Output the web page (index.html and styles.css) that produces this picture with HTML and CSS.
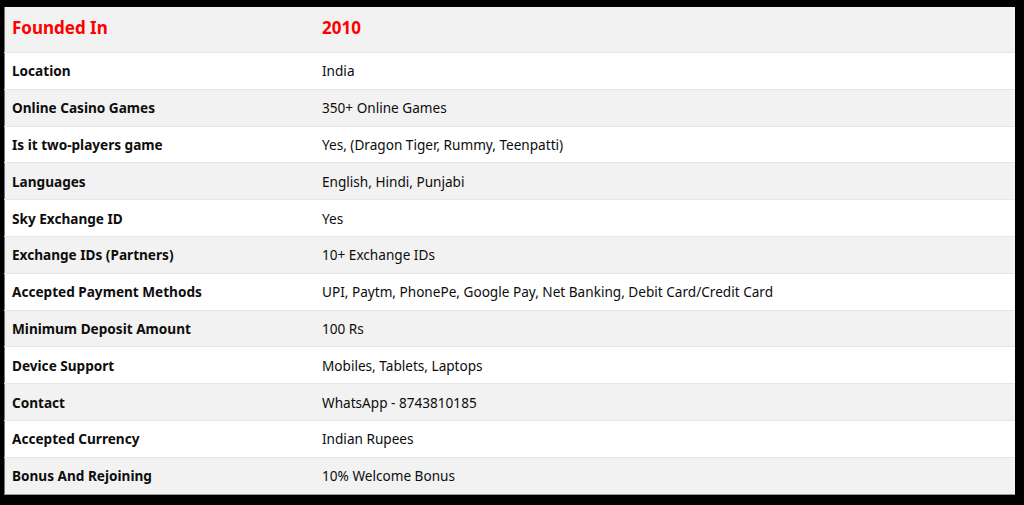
FILE: index.html
```html
<!DOCTYPE html>
<html lang="en">
<head>
<meta charset="utf-8">
<title>Details</title>
<link rel="stylesheet" href="styles.css">
</head>
<body>
<div class="frame">
<table class="info">
  <thead>
    <tr class="head"><th>Founded In</th><th>2010</th></tr>
  </thead>
  <tbody>
    <tr><td>Location</td><td>India</td></tr>
    <tr><td>Online Casino Games</td><td>350+ Online Games</td></tr>
    <tr><td>Is it two-players game</td><td>Yes, (Dragon Tiger, Rummy, Teenpatti)</td></tr>
    <tr><td>Languages</td><td>English, Hindi, Punjabi</td></tr>
    <tr><td>Sky Exchange ID</td><td>Yes</td></tr>
    <tr><td>Exchange IDs (Partners)</td><td>10+ Exchange IDs</td></tr>
    <tr><td>Accepted Payment Methods</td><td>UPI, Paytm, PhonePe, Google Pay, Net Banking, Debit Card/Credit Card</td></tr>
    <tr><td>Minimum Deposit Amount</td><td>100 Rs</td></tr>
    <tr><td>Device Support</td><td>Mobiles, Tablets, Laptops</td></tr>
    <tr><td>Contact</td><td>WhatsApp - 8743810185</td></tr>
    <tr><td>Accepted Currency</td><td>Indian Rupees</td></tr>
    <tr><td>Bonus And Rejoining</td><td>10% Welcome Bonus</td></tr>
  </tbody>
</table>
</div>
</body>
</html>
```

FILE: styles.css
```css
html, body {
  margin: 0;
  padding: 0;
  background: #000;
  height: 100%;
}
.frame {
  padding: 7px 9px 11px 4px;
}
.info {
  width: 1011px;
  border-collapse: collapse;
  font-family: "Noto Sans", "Open Sans", sans-serif;
  font-size: 13.6px;
  color: #0d0d0d;
  background: #fff;
  border-left: 1px solid #777;
  border-bottom: 1px solid #999;
}
.info th,
.info td {
  text-align: left;
  padding: 0 7px;
  vertical-align: middle;
  border-top: 1px solid #e6e6e6;
}
.info th:first-child,
.info td:first-child {
  width: 296px;
  font-weight: 700;
}
.info td {
  height: 35.8px;
  font-weight: 400;
}
.info tbody tr:nth-child(odd) { background: #fff; }
.info tbody tr:nth-child(even) { background: #f2f2f2; }
.head {
  background: #f2f2f2;
}
.head th {
  height: 40px;
  padding-bottom: 5px;
  font-size: 17px;
  font-weight: 700;
  color: #ff0000;
  border-top: none;
}
```
